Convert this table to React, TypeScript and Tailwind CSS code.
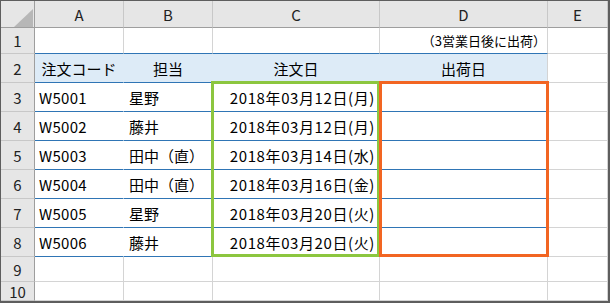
import React from 'react';

const rows = [
  { code: 'W5001', staff: '星野', date: '2018年03月12日(月)' },
  { code: 'W5002', staff: '藤井', date: '2018年03月12日(月)' },
  { code: 'W5003', staff: '田中（直）', date: '2018年03月14日(水)' },
  { code: 'W5004', staff: '田中（直）', date: '2018年03月16日(金)' },
  { code: 'W5005', staff: '星野', date: '2018年03月20日(火)' },
  { code: 'W5006', staff: '藤井', date: '2018年03月20日(火)' },
];

const colHead = 'flex items-center justify-center bg-[#e6e6e6] border-r border-b border-r-[#c8c8c8] border-b-[#9e9e9e] text-[15px] text-[#222]';
const rowHead = 'flex items-center justify-center bg-[#e6e6e6] border-r border-b border-r-[#9e9e9e] border-b-[#c8c8c8] text-[15px] text-[#222]';
const plain = 'border-r border-b border-[#d4d4d4]';

const App = () => {
  return (
    <div
      className="w-[610px] h-[303px] overflow-hidden bg-white border-t border-l border-r-2 border-b-2 border-[#5e5e5e]"
      style={{ fontFamily: '"Noto Sans CJK JP", "Noto Sans", sans-serif' }}
    >
      <div className="relative grid h-full grid-cols-[34px_89px_89px_167px_168px_1fr] grid-rows-[27px_26px_29px_29px_29px_29px_29px_29px_29px_25px_1fr] text-[15px] text-black leading-none">
        {/* header row */}
        <div className="relative bg-[#e6e6e6] border-r border-b border-r-[#9e9e9e] border-b-[#9e9e9e]">
          <svg className="absolute left-[13px] top-[8px]" width="19" height="18" viewBox="0 0 19 18">
            <polygon points="0,18 19,18 19,0" fill="#b7b7b7" />
          </svg>
        </div>
        <div className={colHead}>A</div>
        <div className={colHead}>B</div>
        <div className={colHead}>C</div>
        <div className={colHead}>D</div>
        <div className={colHead}>E</div>

        {/* row 1 */}
        <div className={rowHead}>1</div>
        <div className="border-r border-b border-r-[#d4d4d4] border-b-[#2f75b5]" />
        <div className="border-r border-b border-r-[#d4d4d4] border-b-[#2f75b5]" />
        <div className="border-r border-b border-r-[#d4d4d4] border-b-[#2f75b5]" />
        <div className="flex items-center justify-end pr-[1px] text-[13px] whitespace-nowrap border-r border-b border-r-[#d4d4d4] border-b-[#2f75b5]">
          （3営業日後に出荷）
        </div>
        <div className={plain} />

        {/* row 2 */}
        <div className={rowHead}>2</div>
        <div className="flex items-center justify-center bg-[#ddebf7] border-r border-b border-r-[#ddebf7] border-b-[#2f75b5]">注文コード</div>
        <div className="flex items-center justify-center bg-[#ddebf7] border-r border-b border-r-[#ddebf7] border-b-[#2f75b5]">担当</div>
        <div className="flex items-center justify-center bg-[#ddebf7] border-r border-b border-r-[#ddebf7] border-b-[#2f75b5]">注文日</div>
        <div className="flex items-center justify-center bg-[#ddebf7] border-r border-b border-r-[#d4d4d4] border-b-[#2f75b5]">出荷日</div>
        <div className={plain} />

        {rows.map((r, i) => (
          <React.Fragment key={r.code}>
            <div className={rowHead}>{i + 3}</div>
            <div className="flex items-center pl-[4px] tracking-[0.3px] border-r border-b border-r-white border-b-[#2f75b5]">{r.code}</div>
            <div className="flex items-center pl-[5px] border-r border-b border-r-white border-b-[#2f75b5]">{r.staff}</div>
            <div className="flex items-center justify-end pr-[4px] tracking-[0.6px] whitespace-nowrap border-r border-b border-r-white border-b-[#2f75b5]">{r.date}</div>
            <div className="border-r border-b border-r-[#d4d4d4] border-b-[#2f75b5]" />
            <div className={plain} />
          </React.Fragment>
        ))}

        {/* rows 9-10 */}
        {[9, 10].map((n) => (
          <React.Fragment key={n}>
            <div className={rowHead}>{n}</div>
            <div className={plain} />
            <div className={plain} />
            <div className={plain} />
            <div className={plain} />
            <div className={plain} />
          </React.Fragment>
        ))}

        {/* range outlines C3:C8 and D3:D8, drawn over the cells */}
        <div className="absolute left-[210px] top-[80px] w-[169px] h-[176px] border-[3px] border-[#8cc63f] pointer-events-none" />
        <div className="absolute left-[378px] top-[80px] w-[170px] h-[176px] border-[3px] border-[#f26522] pointer-events-none" />
      </div>
    </div>
  );
};

export default App;
